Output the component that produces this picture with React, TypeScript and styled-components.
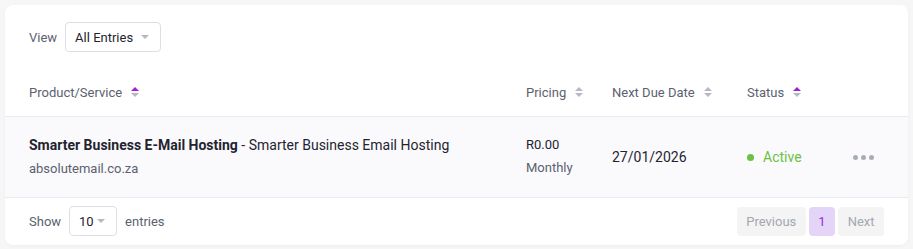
import React from 'react';
import styled, { createGlobalStyle } from 'styled-components';

const GlobalStyle = createGlobalStyle`
  body {
    margin: 0;
    background: #f6f6f7;
    font-family: Roboto, "Noto Sans", sans-serif;
    -webkit-font-smoothing: antialiased;
  }
`;

const Page = styled.div`
  padding: 5px;
`;

const Card = styled.div`
  width: 903px;
  background: #ffffff;
  border-radius: 8px;
  box-shadow: 0 1px 3px rgba(0, 0, 0, 0.04);
  overflow: hidden;
`;

const Toolbar = styled.div`
  display: flex;
  align-items: center;
  gap: 8px;
  padding: 17px 24px 16px;
  font-size: 13px;
  color: #5b6170;
`;

const Select = styled.div<{ $width: number }>`
  display: flex;
  align-items: center;
  justify-content: space-between;
  box-sizing: border-box;
  width: ${p => p.$width}px;
  height: 30px;
  padding: 0 11px 0 9px;
  border: 1px solid #dcdfe6;
  border-radius: 4px;
  font-size: 13px;
  color: #1f2430;
`;

const Caret = styled.span`
  width: 0;
  height: 0;
  border-left: 4px solid transparent;
  border-right: 4px solid transparent;
  border-top: 4px solid #b6b9c2;
`;

const Row = styled.div<{ $head?: boolean }>`
  display: grid;
  grid-template-columns: 497px 86px 135px 106px 1fr;
  align-items: center;
  padding: 0 24px;
  height: ${p => (p.$head ? 48 : 80)}px;
  background: ${p => (p.$head ? '#ffffff' : '#fafafc')};
  border-bottom: 1px solid #e9eaee;
`;

const HeadCell = styled.div`
  display: flex;
  align-items: center;
  gap: 9px;
  font-size: 13px;
  color: #5b6170;
`;

const Sort = styled.span<{ $active?: boolean }>`
  display: inline-flex;
  flex-direction: column;
  gap: 2px;
  &::before,
  &::after {
    content: '';
    width: 0;
    height: 0;
    border-left: 4px solid transparent;
    border-right: 4px solid transparent;
  }
  &::before {
    border-bottom: 4px solid ${p => (p.$active ? '#a21fd6' : '#b6b9c2')};
  }
  &::after {
    border-top: 4px solid #b6b9c2;
  }
`;

const Stack = styled.div`
  display: flex;
  flex-direction: column;
  gap: 8px;
  margin-top: -2px;
`;

const Main = styled.div`
  color: #1f2430;
  font-size: 14px;
  b {
    font-weight: 700;
  }
`;

const Sub = styled.div`
  color: #5b6170;
  font-size: 13px;
`;

const Price = styled.div`
  color: #1f2430;
  font-size: 13px;
`;

const DateText = styled.div`
  color: #1f2430;
  font-size: 14px;
`;

const Status = styled.div`
  display: flex;
  align-items: center;
  gap: 9px;
  color: #6cc144;
  font-size: 14px;
  &::before {
    content: '';
    width: 7px;
    height: 7px;
    border-radius: 50%;
    background: #6cc144;
  }
`;

const Dots = styled.div`
  display: flex;
  gap: 3px;
  span {
    width: 5px;
    height: 5px;
    border-radius: 50%;
    background: #a9adb8;
  }
`;

const Footer = styled.div`
  display: flex;
  align-items: center;
  justify-content: space-between;
  padding: 8px 24px 9px;
`;

const Show = styled.div`
  display: flex;
  align-items: center;
  gap: 8px;
  font-size: 13px;
  color: #5b6170;
`;

const Pager = styled.div`
  display: flex;
  gap: 3px;
`;

const PageButton = styled.button<{ $active?: boolean }>`
  height: 29px;
  padding: 0 9.5px;
  min-width: 25px;
  border: 0;
  border-radius: 4px;
  font-family: Roboto, sans-serif;
  font-size: 13px;
  background: ${p => (p.$active ? '#e4d5f8' : '#f4f4f5')};
  color: ${p => (p.$active ? '#9b2fd8' : '#a3a7b0')};
`;

const App: React.FC = () => {
  return (
    <Page>
      <GlobalStyle />
      <Card>
        <Toolbar>
          <span>View</span>
          <Select $width={96}>
            <span>All Entries</span>
            <Caret />
          </Select>
        </Toolbar>
        <Row $head>
          <HeadCell>Product/Service <Sort $active /></HeadCell>
          <HeadCell>Pricing <Sort /></HeadCell>
          <HeadCell>Next Due Date <Sort /></HeadCell>
          <HeadCell>Status <Sort $active /></HeadCell>
          <div />
        </Row>
        <Row>
          <Stack>
            <Main><b>Smarter Business E-Mail Hosting</b> - Smarter Business Email Hosting</Main>
            <Sub>absolutemail.co.za</Sub>
          </Stack>
          <Stack>
            <Price>R0.00</Price>
            <Sub>Monthly</Sub>
          </Stack>
          <DateText>27/01/2026</DateText>
          <Status>Active</Status>
          <Dots><span /><span /><span /></Dots>
        </Row>
        <Footer>
          <Show>
            <span>Show</span>
            <Select $width={48}>
              <span>10</span>
              <Caret />
            </Select>
            <span>entries</span>
          </Show>
          <Pager>
            <PageButton>Previous</PageButton>
            <PageButton $active>1</PageButton>
            <PageButton>Next</PageButton>
          </Pager>
        </Footer>
      </Card>
    </Page>
  );
};

export default App;
